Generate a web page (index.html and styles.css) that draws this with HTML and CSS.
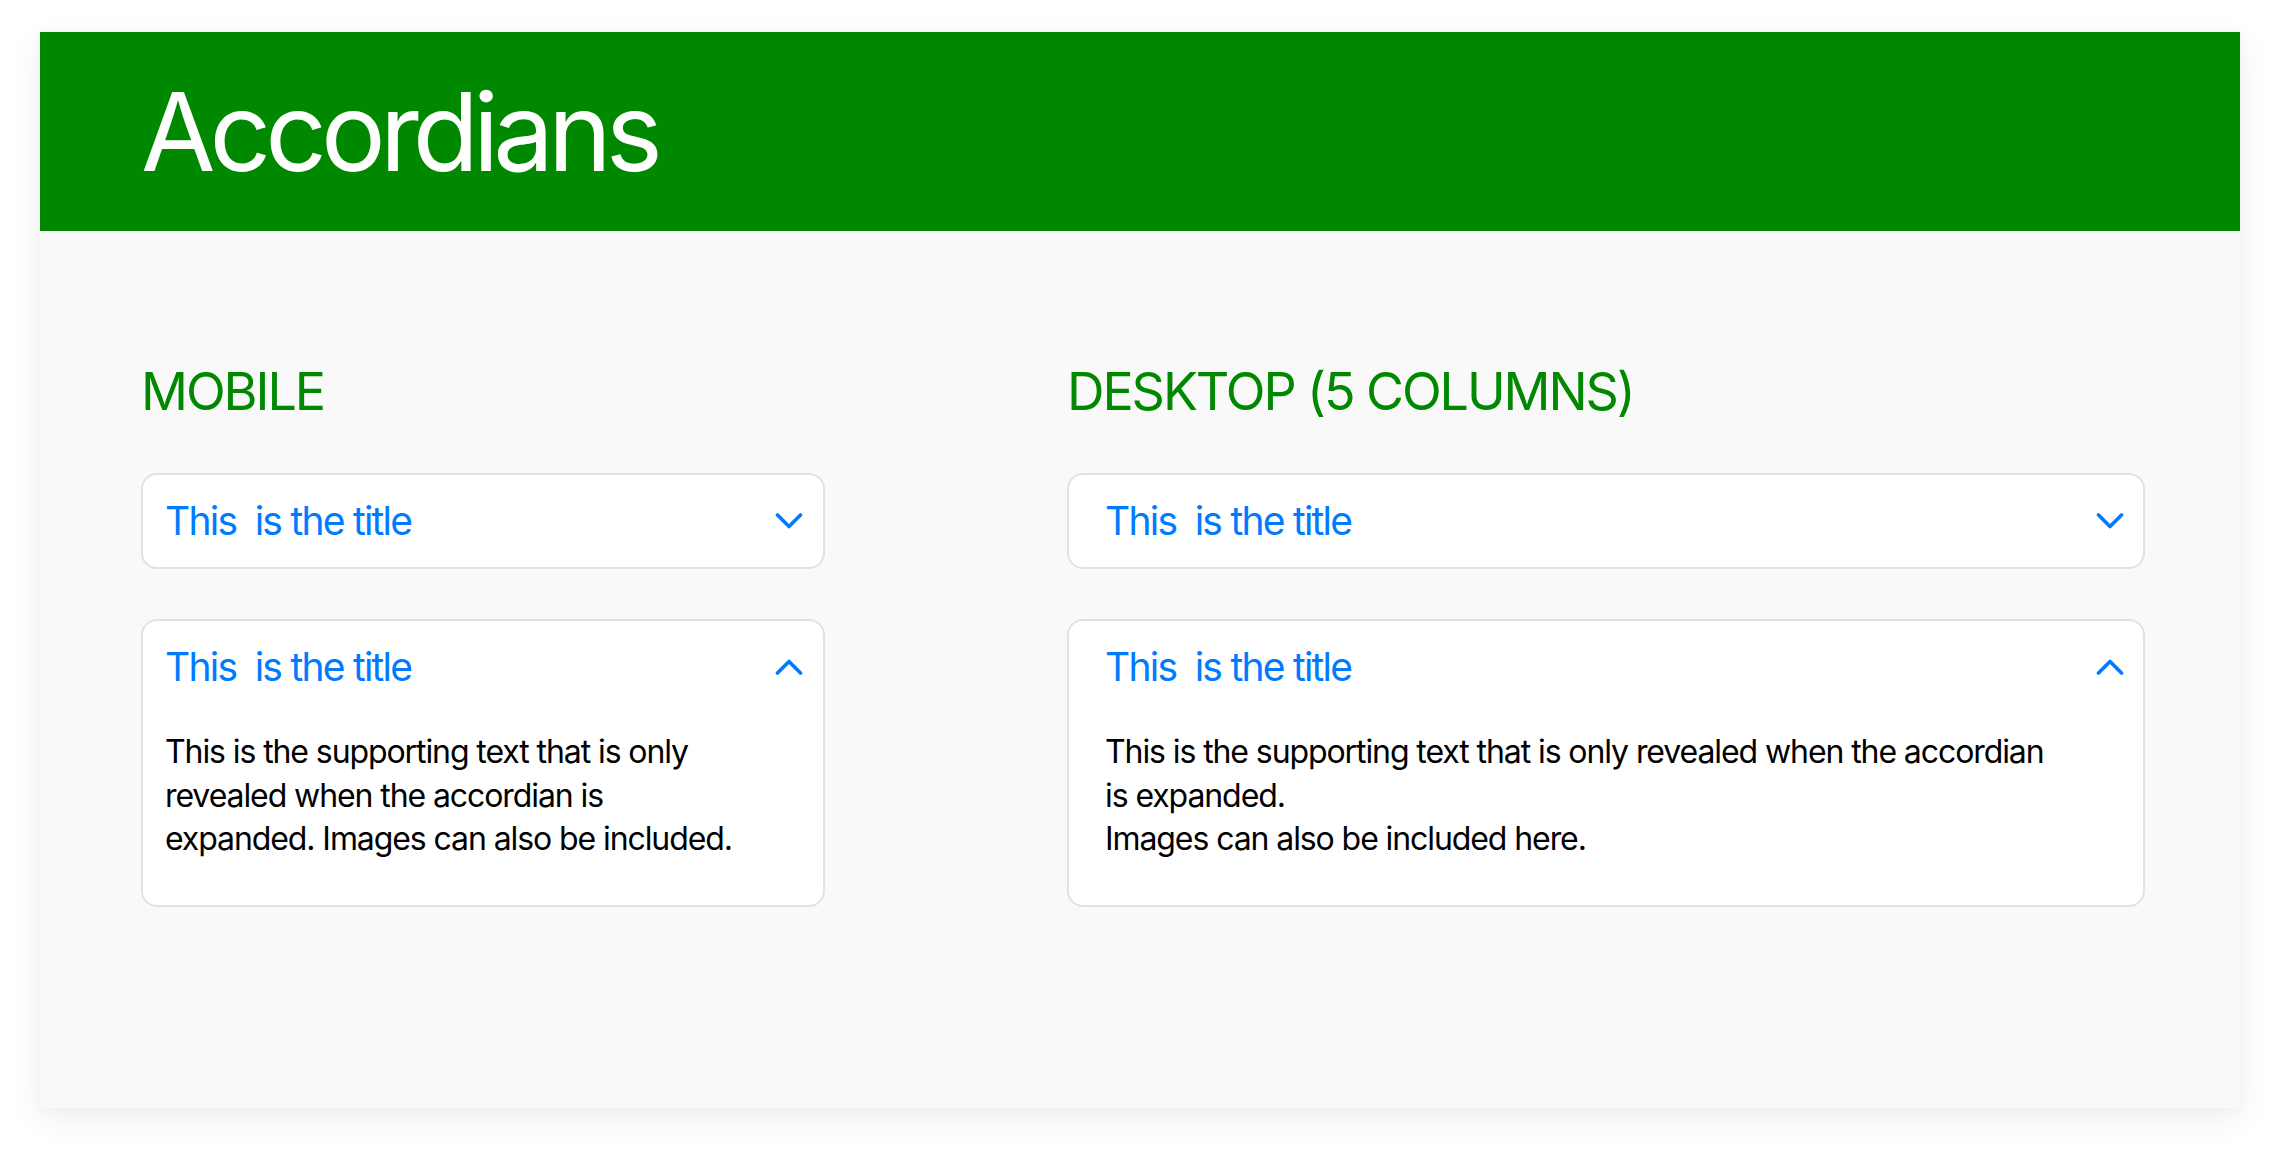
FILE: index.html
```html
<!DOCTYPE html>
<html lang="en">
<head>
<meta charset="utf-8">
<title>Accordians</title>
<link rel="stylesheet" href="styles.css">
</head>
<body>
  <div class="card">
    <header class="hero">
      <h1 class="hero-title">Accordians</h1>
    </header>
    <main class="content">
      <section class="col col-mobile">
        <h2 class="col-heading">MOBILE</h2>
        <div class="acc">
          <div class="acc-head">
            <span class="acc-title">This&nbsp; is the title</span>
            <svg class="chev" width="28" height="18" viewBox="0 0 28 18"><polyline points="2.5,3 14,14.5 25.5,3" fill="none" stroke="#007aff" stroke-width="3.6" stroke-linecap="round" stroke-linejoin="round"/></svg>
          </div>
        </div>
        <div class="acc open">
          <div class="acc-head">
            <span class="acc-title">This&nbsp; is the title</span>
            <svg class="chev" width="28" height="18" viewBox="0 0 28 18"><polyline points="2.5,15 14,3.5 25.5,15" fill="none" stroke="#007aff" stroke-width="3.6" stroke-linecap="round" stroke-linejoin="round"/></svg>
          </div>
          <div class="acc-body">
            <p class="acc-text">This is the supporting text that is only revealed when the accordian is expanded. Images can also be included.</p>
          </div>
        </div>
      </section>
      <section class="col col-desktop">
        <h2 class="col-heading">DESKTOP (5 COLUMNS)</h2>
        <div class="acc">
          <div class="acc-head">
            <span class="acc-title">This&nbsp; is the title</span>
            <svg class="chev" width="28" height="18" viewBox="0 0 28 18"><polyline points="2.5,3 14,14.5 25.5,3" fill="none" stroke="#007aff" stroke-width="3.6" stroke-linecap="round" stroke-linejoin="round"/></svg>
          </div>
        </div>
        <div class="acc open">
          <div class="acc-head">
            <span class="acc-title">This&nbsp; is the title</span>
            <svg class="chev" width="28" height="18" viewBox="0 0 28 18"><polyline points="2.5,15 14,3.5 25.5,15" fill="none" stroke="#007aff" stroke-width="3.6" stroke-linecap="round" stroke-linejoin="round"/></svg>
          </div>
          <div class="acc-body">
            <p class="acc-text">This is the supporting text that is only revealed when the accordian is expanded.<br>Images can also be included here.</p>
          </div>
        </div>
      </section>
    </main>
  </div>
</body>
</html>
```
FILE: styles.css
```css
* { box-sizing: border-box; }

html, body {
  margin: 0;
  background: #ffffff;
}

body {
  padding: 32px 40px 48px;
  font-family: Inter, "Noto Sans", "Liberation Sans", sans-serif;
}

.card {
  width: 2200px;
  height: 1076px;
  background: #f9f9f9;
  box-shadow: 0 10px 32px rgba(0, 0, 0, 0.07), 0 0 12px rgba(0, 0, 0, 0.03);
  display: flex;
  flex-direction: column;
}

.hero {
  height: 199px;
  background: #008800;
  display: flex;
  align-items: center;
  padding-left: 101px;
}

.hero-title {
  margin: 0;
  color: #ffffff;
  font-weight: 400;
  font-size: 108px;
  line-height: 1;
  letter-spacing: -0.055em;
}

.content {
  display: grid;
  grid-template-columns: 684px 1078px;
  column-gap: 242px;
  padding: 135px 0 0 101px;
  align-items: start;
}

.col {
  display: flex;
  flex-direction: column;
}

.col-heading {
  margin: 0 0 55px;
  color: #008800;
  font-weight: 400;
  font-size: 52px;
  line-height: 52px;
  letter-spacing: -0.04em;
}

.acc {
  background: #ffffff;
  border: 2px solid #e2e2e2;
  border-radius: 16px;
  margin-bottom: 50px;
}

.acc-head {
  height: 92px;
  display: flex;
  align-items: center;
  justify-content: space-between;
  padding: 0 20px 0 22px;
}

.col-desktop .acc-head {
  padding: 0 19px 0 36px;
}

.acc-title {
  color: #007aff;
  font-size: 39px;
  line-height: 48px;
  letter-spacing: -0.045em;
}

.chev {
  display: block;
}

.acc-body {
  padding: 17px 22px 44px;
}

.col-desktop .acc-body {
  padding: 17px 36px 44px;
}

.acc-text {
  margin: 0;
  color: #000000;
  font-size: 32px;
  line-height: 43.5px;
  letter-spacing: -0.034em;
}

.col-mobile .acc-text {
  max-width: 580px;
}

.col-desktop .acc-text {
  max-width: 950px;
}
```
